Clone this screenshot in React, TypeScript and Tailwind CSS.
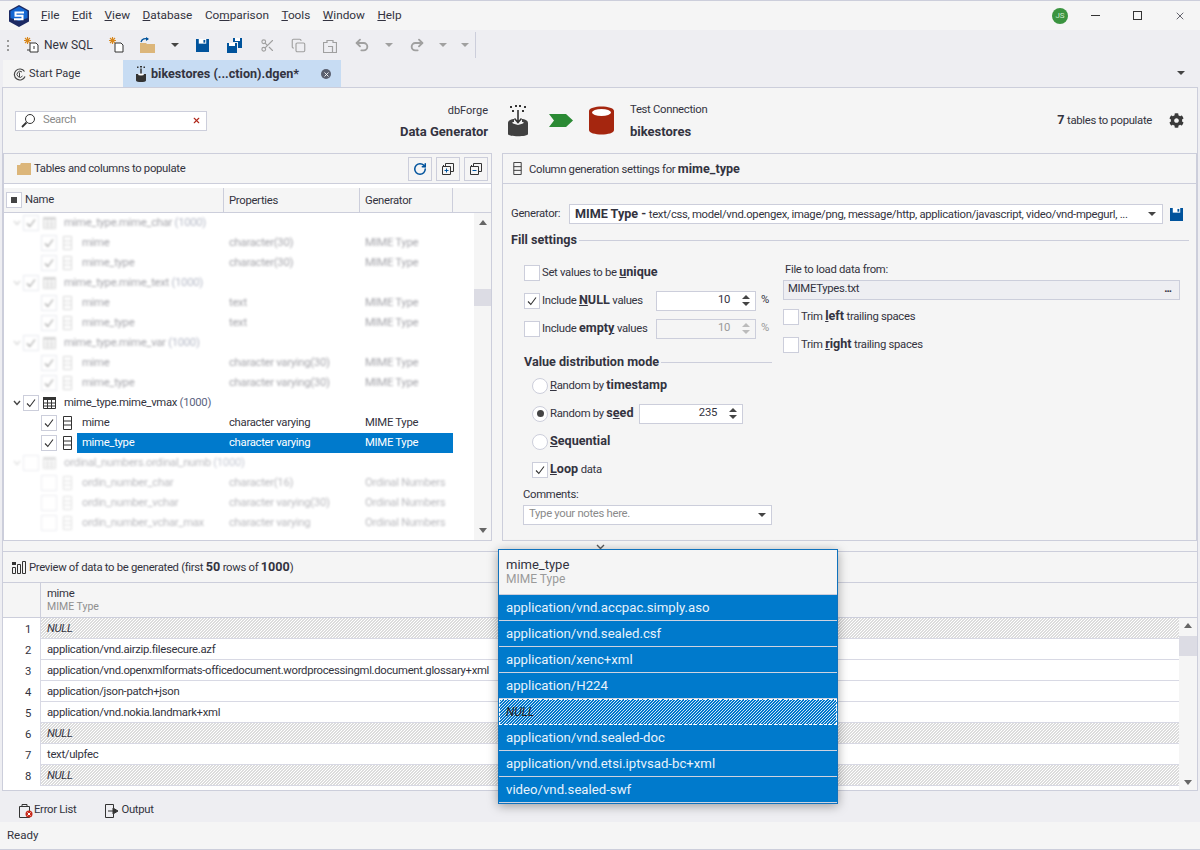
import type { ReactNode } from 'react'
import { Copy, RotateCw, Scissors, Undo2, Redo2, X } from 'lucide-react'
import { FaCog } from 'react-icons/fa'

const menus: [string, string, string][] = [
  ['', 'F', 'ile'],
  ['', 'E', 'dit'],
  ['', 'V', 'iew'],
  ['', 'D', 'atabase'],
  ['Co', 'm', 'parison'],
  ['', 'T', 'ools'],
  ['', 'W', 'indow'],
  ['', 'H', 'elp'],
]

function Caret({ className = 'border-t-[#444]' }: { className?: string }) {
  return <span className={`inline-block h-0 w-0 border-x-[4px] border-t-[4px] border-x-transparent ${className}`} />
}

function Check({ on, className = '' }: { on?: boolean; className?: string }) {
  return (
    <span className={`flex h-4 w-4 shrink-0 items-center justify-center border border-[#cccedb] bg-white ${className}`}>
      {on && (
        <svg width="10" height="10" viewBox="0 0 10 10">
          <path d="M1 5.5 L3.8 8.5 L9 1.5" fill="none" stroke="#333" strokeWidth="1.1" />
        </svg>
      )}
    </span>
  )
}

function Radio({ on }: { on?: boolean }) {
  return (
    <span className="flex h-4 w-4 shrink-0 items-center justify-center rounded-full border border-[#cccedb] bg-white">
      {on && <span className="h-[7px] w-[7px] rounded-full bg-[#444]" />}
    </span>
  )
}

function Spin({ dim }: { dim?: boolean }) {
  const c = dim ? 'border-b-[#bbb]' : 'border-b-[#444]'
  const d = dim ? 'border-t-[#bbb]' : 'border-t-[#444]'
  return (
    <span className="flex flex-col gap-[3px]">
      <span className={`h-0 w-0 border-x-[4px] border-b-[4px] border-x-transparent ${c}`} />
      <span className={`h-0 w-0 border-x-[4px] border-t-[4px] border-x-transparent ${d}`} />
    </span>
  )
}

function Floppy({ size = 14 }: { size?: number }) {
  return (
    <svg width={size} height={size} viewBox="0 0 14 14">
      <path d="M0 0H14V14H0Z" fill="#00539c" />
      <path d="M3 0H11V5H3Z" fill="#fff" />
      <path d="M8 1H10V4H8Z" fill="#00539c" />
    </svg>
  )
}

function DoubleFloppy() {
  return (
    <svg width="15" height="15" viewBox="0 0 15 15">
      <path d="M0 5H10V15H0Z" fill="#00539c" />
      <path d="M2 5H8V8H2Z" fill="#fff" />
      <path d="M6 0H15V10H11V4H6Z" fill="#00539c" />
      <path d="M8 0H13V3H8Z" fill="#fff" />
    </svg>
  )
}

function NewDoc({ tail }: { tail?: boolean }) {
  return (
    <svg width="16" height="16" viewBox="0 0 16 16">
      <path d="M6 6H12L14 8V15H6Z" fill="#fff" stroke="#333" />
      {tail && <path d="M3 13H6M10 9V12" stroke="#333" />}
      <path d="M3.5 0V7M0 3.5H7M1 1L6 6M6 1L1 6" stroke="#d8871c" strokeWidth="1.1" />
    </svg>
  )
}

function OpenFolder() {
  return (
    <svg width="16" height="16" viewBox="0 0 16 16">
      <path d="M0 6H6L7 7H15V16H0Z" fill="#dcb67a" />
      <path d="M1 5C2 2 5 1 8 2" fill="none" stroke="#00539c" strokeWidth="1.4" />
      <path d="M6 0L9 2L6 4Z" fill="#00539c" />
    </svg>
  )
}

function ColIcon({ light, size = 14 }: { light?: boolean; size?: number }) {
  const c = light ? '#aaa' : '#333'
  return (
    <svg width="9" height={size} viewBox="0 0 9 14" className="shrink-0">
      <path d="M.5.5H8.5V13.5H.5ZM.5 5H8.5M.5 9H8.5" fill="none" stroke={c} />
    </svg>
  )
}

function TableIcon({ light }: { light?: boolean }) {
  const c = light ? '#aaa' : '#333'
  return (
    <svg width="13" height="12" viewBox="0 0 13 12" className="shrink-0">
      <path d="M.5.5H12.5V11.5H.5Z" fill="none" stroke={c} />
      <path d="M0 0H13V3H0Z" fill={c} />
      <path d="M.5 6H12.5M.5 9H12.5M4.5 3V12M8.5 3V12" stroke={c} fill="none" />
    </svg>
  )
}

function GenDb({ w = 20, h = 32 }: { w?: number; h?: number }) {
  return (
    <svg width={w} height={h} viewBox="0 0 20 32">
      <path d="M2 1H4V3H2ZM7 0H9V2H7ZM11 0H13V2H11ZM16 1H18V3H16ZM4 5H6V7H4ZM14 5H16V7H14Z" fill="#333" />
      <path d="M0 18C0 15 4 14 6 14V17C4 17 2 18 10 20C18 18 16 17 14 17V14C16 14 20 15 20 18V29C20 32 0 32 0 29Z" fill="#414141" />
      <path d="M10 5V17M6.5 13.5L10 17.5L13.5 13.5" fill="none" stroke="#333" strokeWidth="1.6" />
    </svg>
  )
}

function TabGenDb() {
  return (
    <svg width="12" height="16" viewBox="0 0 20 32">
      <path d="M2 1H5V4H2ZM8 0H12V3H8ZM15 1H18V4H15Z" fill="#333" />
      <path d="M0 16H20V29C20 33 0 33 0 29Z" fill="#333" />
      <path d="M10 5V20" stroke="#333" strokeWidth="3" />
      <ellipse cx="10" cy="17" rx="6" ry="2" fill="#fff" />
    </svg>
  )
}

function Logo() {
  return (
    <svg width="20" height="22" viewBox="0 0 20 22">
      <path d="M10 0L20 5.5V16.5L10 22L0 16.5V5.5Z" fill="#1c2a63" />
      <path d="M10 1.5L18.5 6.2V13L10 16L1.5 13V6.2Z" fill="#1467d2" />
      <path d="M15 7.5H6.5V10.8H13.5V14.2H5" fill="none" stroke="#fff" strokeWidth="2" />
    </svg>
  )
}

function ToolBtn({ children }: { children: ReactNode }) {
  return (
    <button className="flex h-6 w-6 items-center justify-center border border-[#cccedb] bg-[#f5f5f5]">
      {children}
    </button>
  )
}

function CollapseIcon({ plus }: { plus?: boolean }) {
  return (
    <svg width="12" height="12" viewBox="0 0 12 12">
      <path d="M3.5 3V.5H11.5V8.5H9M1.5 3V2" fill="none" stroke="#333" />
      <path d="M.5 3.5H8.5V11.5H.5Z" fill="#f5f5f5" stroke="#333" />
      <path d={plus ? 'M2.5 7.5H6.5M4.5 5.5V9.5' : 'M2.5 7.5H6.5'} stroke="#00539c" />
    </svg>
  )
}

function TableRow({ name, count, on, light }: { name: string; count: string; on?: boolean; light?: boolean }) {
  return (
    <div className="flex h-5 items-center whitespace-nowrap">
      <span className="ml-[8px] w-[10px]">
        <svg width="8" height="6" viewBox="0 0 8 6">
          <path d="M1 1L4 4.5L7 1" fill="none" stroke={light ? '#aaa' : '#444'} strokeWidth="1.4" />
        </svg>
      </span>
      <Check on={on} />
      <span className="ml-[4px]">
        <TableIcon light={light} />
      </span>
      <span className="mt-px ml-[8px]">
        {name} <span className="text-[#5a6380]">({count})</span>
      </span>
    </div>
  )
}

function ColRow({ name, prop, gen, on, sel, light }: { name: string; prop: string; gen: string; on?: boolean; sel?: boolean; light?: boolean }) {
  return (
    <div className="flex h-5 items-center whitespace-nowrap">
      <span className="ml-[36px]">
        <Check on={on} />
      </span>
      <span className="ml-[6px] w-[14px]">
        <ColIcon light={light} />
      </span>
      <div className={`flex h-5 w-[376px] items-center pt-px ${sel ? 'bg-[#007acc] text-white' : ''}`}>
        <span className="w-[152px] pl-[5px]">{name}</span>
        <span className="w-[136px]">{prop}</span>
        <span>{gen}</span>
      </div>
    </div>
  )
}

function Label({ children }: { children: ReactNode }) {
  return <span className="ml-[2px] whitespace-nowrap">{children}</span>
}

function NumBox({ value, w, dim }: { value: string; w: string; dim?: boolean }) {
  return (
    <div className={`flex h-5 items-center justify-end border border-[#cccedb] pr-[5px] ${w} ${dim ? 'bg-[#f5f5f5] text-[#999]' : 'bg-white'}`}>
      <span className="mr-[12px]">{value}</span>
      <Spin dim={dim} />
    </div>
  )
}

function HatchRow({ n }: { n: number }) {
  return (
    <div className="flex h-[21px]">
      <span className="w-[37px] pr-[9px] text-right leading-[23px]">{n}</span>
      <div className="flex-1 border-b border-l border-[#d8d9e4] bg-[linear-gradient(135deg,#dcdcdc_25%,#fff_25%,#fff_50%,#dcdcdc_50%,#dcdcdc_75%,#fff_75%)] bg-[length:3px_3px] pl-[6px] leading-[21px]">
        <i>NULL</i>
      </div>
    </div>
  )
}

function TextRow({ n, text }: { n: number; text: string }) {
  return (
    <div className="flex h-[21px]">
      <span className="w-[37px] pr-[9px] text-right leading-[23px]">{n}</span>
      <div className="flex-1 border-b border-l border-[#d8d9e4] pl-[6px] leading-[21px] whitespace-nowrap">{text}</div>
    </div>
  )
}

const popupRows = [
  'application/vnd.accpac.simply.aso',
  'application/vnd.sealed.csf',
  'application/xenc+xml',
  'application/H224',
  null,
  'application/vnd.sealed-doc',
  'application/vnd.etsi.iptvsad-bc+xml',
  'video/vnd.sealed-swf',
]

export default function App() {
  return (
    <div className="relative flex h-[850px] w-[1200px] flex-col overflow-hidden border-t border-[#cccedb] bg-[#eeeef2] font-['Roboto',sans-serif] text-[11.3px] tracking-[-0.3px] text-[#333340] [&_b]:text-[12.6px] [&_b]:tracking-normal">
      {/* title bar */}
      <div className="flex h-[29px] shrink-0 items-center bg-[#f5f5f5]">
        <span className="ml-[9px] flex">
          <Logo />
        </span>
        <nav className="ml-[12px] flex gap-[12.5px] text-[11.8px] tracking-normal">
          {menus.map(([a, u, b]) => (
            <span key={a + u + b}>
              {a}
              <u>{u}</u>
              {b}
            </span>
          ))}
        </nav>
        <span className="ml-auto flex h-4 w-4 items-center justify-center rounded-full bg-[#3b9440] text-[8px] tracking-normal text-[#cfe8cf]">JS</span>
        <span className="ml-[23px] h-[1px] w-[9px] bg-[#333]" />
        <span className="ml-[33px] h-[9px] w-[9px] border border-[#333]" />
        <span className="mr-[14px] ml-[32px]">
          <X size={12} strokeWidth={1.5} />
        </span>
      </div>

      {/* toolbar */}
      <div className="flex h-[30px] shrink-0 items-center">
        <span className="ml-[7px] h-[11px] w-[2px] border-l-2 border-dotted border-[#999]" />
        <span className="ml-[15px]">
          <NewDoc tail />
        </span>
        <span className="ml-[4px] text-[12px] tracking-normal">New SQL</span>
        <span className="ml-[16px]">
          <NewDoc />
        </span>
        <span className="ml-[15px]">
          <OpenFolder />
        </span>
        <span className="ml-[15px] flex">
          <Caret />
        </span>
        <span className="ml-[17px] flex">
          <Floppy size={13} />
        </span>
        <span className="ml-[18px] flex">
          <DoubleFloppy />
        </span>
        <Scissors size={15} strokeWidth={1.8} className="ml-[18px] text-[#a0a0a0]" />
        <Copy size={15} strokeWidth={1.8} className="ml-[16px] text-[#a0a0a0]" />
        <svg width="14" height="15" viewBox="0 0 14 15" className="ml-[17px]">
          <path d="M.5 4.5H4V2.5H10V4.5H13.5V14.5H.5ZM5 8.5H9.5V14" fill="none" stroke="#a0a0a0" strokeWidth="1.2" />
        </svg>
        <Undo2 size={16} strokeWidth={2.8} className="ml-[17px] text-[#a0a0a0]" />
        <span className="ml-[15px] flex">
          <Caret className="border-t-[#a0a0a0]" />
        </span>
        <Redo2 size={16} strokeWidth={2.8} className="ml-[16px] text-[#a0a0a0]" />
        <span className="ml-[14px] flex">
          <Caret className="border-t-[#a0a0a0]" />
        </span>
        <span className="ml-[14px] flex">
          <Caret className="border-t-[#a0a0a0]" />
        </span>
        <span className="ml-[6px] h-[26px] w-px bg-[#cccedb]" />
      </div>

      {/* document tabs */}
      <div className="flex h-[27px] shrink-0 items-stretch pl-[3px]">
        <div className="flex w-[120px] items-center gap-[3px] bg-[#f5f5f5] pt-[2px] pl-[10px]">
          <svg width="13" height="13" viewBox="0 0 13 13">
            <path d="M11.5 3.5A5.5 5.5 0 1 0 12 8.5" fill="none" stroke="#444" strokeWidth="1.2" />
            <path d="M9 4A3 3 0 1 0 9.5 8" fill="none" stroke="#444" />
            <path d="M6.5 4.5V9" stroke="#444" />
          </svg>
          <span className="text-[11px] tracking-normal">Start Page</span>
        </div>
        <div className="flex w-[218px] items-center bg-[#c7dcf3] pt-[1px] pl-[12px]">
          <TabGenDb />
          <span className="ml-[4px] text-[12.6px] font-bold tracking-normal">bikestores (...ction).dgen*</span>
          <span className="mr-[10px] ml-auto flex h-[10px] w-[10px] items-center justify-center rounded-full bg-[#5a5f6e] text-white">
            <X size={7} strokeWidth={3} />
          </span>
        </div>
        <span className="mt-[11px] mr-[15px] ml-auto">
          <span className="flex">
            <Caret />
          </span>
        </span>
      </div>

      {/* document */}
      <div className="mx-[2px] flex min-h-0 flex-1 flex-col border border-[#cccedb] bg-[#f5f5f5]">
        {/* header */}
        <div className="flex h-[65px] shrink-0 items-center">
          <div className="ml-[12px] flex h-[20px] w-[192px] items-center border border-[#cccedb] bg-white pr-[5px]">
            <svg width="15" height="15" viewBox="0 0 15 15" className="ml-[5px]">
              <circle cx="9" cy="6" r="4.5" fill="none" stroke="#333" />
              <path d="M5.5 9.5L1 14" stroke="#333" strokeWidth="1.8" />
            </svg>
            <span className="ml-[7px] text-[#8a8a8a]">Search</span>
            <X size={9} strokeWidth={3} className="ml-auto text-[#b0281a]" />
          </div>
          <div className="flex w-[281px] flex-col items-end gap-[3px] pt-[3px] text-[11px] tracking-normal">
            <span>dbForge</span>
            <span className="text-[13px] font-bold">Data Generator</span>
          </div>
          <div className="ml-[20px] flex">
            <GenDb />
          </div>
          <svg width="24" height="13" viewBox="0 0 24 13" className="ml-[21px]">
            <path d="M0 0H17L24 6.5L17 13H0L5 6.5Z" fill="#2b8a34" />
          </svg>
          <svg width="25" height="29" viewBox="0 0 25 29" className="ml-[16px]">
            <path d="M0 5C0-1 25-1 25 5V24C25 30 0 30 0 24Z" fill="#a5260f" />
            <ellipse cx="12.5" cy="6.5" rx="9.5" ry="3.5" fill="#fff" />
          </svg>
          <div className="ml-[16px] flex flex-col gap-[3px] pt-[3px]">
            <span>Test Connection</span>
            <span className="text-[13px] font-bold tracking-normal">bikestores</span>
          </div>
          <span className="ml-auto">
            <b>7</b> tables to populate
          </span>
          <span className="mr-[13px] ml-[17px] flex">
            <FaCog size={15} color="#3a3a3a" />
          </span>
        </div>

        {/* panels */}
        <div className="flex h-[388px] shrink-0 gap-[10px]">
          <div className="flex w-[489px] shrink-0 flex-col border border-[#cccedb]">
            <div className="flex h-[30px] shrink-0 items-center border-b border-[#cccedb] pl-[13px]">
              <svg width="14" height="12" viewBox="0 0 14 12">
                <path d="M0 2H3L4 0H14V12H0Z" fill="#dcb67a" />
              </svg>
              <span className="mt-[2px] ml-[3px]">Tables and columns to populate</span>
              <div className="mr-[3px] ml-auto flex gap-[4px]">
                <ToolBtn>
                  <RotateCw size={14} strokeWidth={2.6} className="text-[#00539c]" />
                </ToolBtn>
                <ToolBtn>
                  <CollapseIcon plus />
                </ToolBtn>
                <ToolBtn>
                  <CollapseIcon />
                </ToolBtn>
              </div>
            </div>
            <div className="flex min-h-0 flex-1 flex-col bg-white">
              <div className="border-t-[4px] border-t-white">
                <div className="flex h-[25px] shrink-0 items-center border-b border-[#cccedb] bg-[#f5f5f5]">
                  <span className="ml-[2px] flex h-4 w-4 items-center justify-center border border-[#cccedb] bg-white">
                    <span className="h-[6px] w-[6px] bg-[#444]" />
                  </span>
                  <span className="mt-px ml-[3px] w-[198px]">Name</span>
                  <span className="h-full w-[136px] border-l border-[#cccedb] pl-[5px] leading-[25px]">Properties</span>
                  <span className="h-full w-[94px] border-r border-l border-[#cccedb] pl-[5px] leading-[25px]">Generator</span>
                </div>
              </div>
              <div className="flex min-h-0 flex-1">
                <div className="min-w-0 flex-1 overflow-hidden pl-px">
                  <div className="opacity-45 blur-[1.2px]">
                    <TableRow name="mime_type.mime_char" count="1000" on light />
                    <ColRow name="mime" prop="character(30)" gen="MIME Type" on light />
                    <ColRow name="mime_type" prop="character(30)" gen="MIME Type" on light />
                    <TableRow name="mime_type.mime_text" count="1000" on light />
                    <ColRow name="mime" prop="text" gen="MIME Type" on light />
                    <ColRow name="mime_type" prop="text" gen="MIME Type" on light />
                    <TableRow name="mime_type.mime_var" count="1000" on light />
                    <ColRow name="mime" prop="character varying(30)" gen="MIME Type" on light />
                    <ColRow name="mime_type" prop="character varying(30)" gen="MIME Type" on light />
                  </div>
                  <TableRow name="mime_type.mime_vmax" count="1000" on />
                  <ColRow name="mime" prop="character varying" gen="MIME Type" on />
                  <ColRow name="mime_type" prop="character varying" gen="MIME Type" on sel />
                  <div className="opacity-35 blur-[1.2px]">
                    <TableRow name="ordinal_numbers.ordinal_numb" count="1000" light />
                    <ColRow name="ordin_number_char" prop="character(16)" gen="Ordinal Numbers" light />
                    <ColRow name="ordin_number_vchar" prop="character varying(30)" gen="Ordinal Numbers" light />
                    <ColRow name="ordin_number_vchar_max" prop="character varying" gen="Ordinal Numbers" light />
                  </div>
                </div>
                <div className="flex w-[17px] shrink-0 flex-col items-center bg-[#f5f5f5] py-[7px]">
                  <span className="h-0 w-0 border-x-[4px] border-b-[5px] border-x-transparent border-b-[#666]" />
                  <span className="mt-[64px] h-[17px] w-full bg-[#dcdce4]" />
                  <span className="mt-auto h-0 w-0 border-x-[4px] border-t-[5px] border-x-transparent border-t-[#666]" />
                </div>
              </div>
            </div>
          </div>

          <div className="flex min-w-0 flex-1 flex-col border border-[#cccedb] pr-[7px]">
            <div className="-mr-[7px] flex h-[30px] shrink-0 items-center border-b border-[#cccedb] pl-[10px]">
              <ColIcon size={13} />
              <span className="mt-[2px] ml-[7px]">
                Column generation settings for <b>mime_type</b>
              </span>
            </div>
            <div className="mt-[20px] flex items-center pl-[8px]">
              <span className="w-[58px]">Generator:</span>
              <div className="flex h-5 w-[594px] items-center border border-[#cccedb] bg-white pr-[6px] pl-[5px]">
                <span className="min-w-0 flex-1 truncate whitespace-nowrap">
                  <b>MIME Type -</b> text/css, model/vnd.opengex, image/png, message/http, application/javascript, video/vnd-mpegurl, ...
                </span>
                <Caret />
              </div>
              <span className="ml-[7px] flex">
                <Floppy size={13} />
              </span>
            </div>
            <div className="mt-[7px] flex items-center pl-[8px]">
              <b>Fill settings</b>
              <span className="ml-[2px] h-px flex-1 bg-[#cccedb]" />
            </div>
            <div className="flex">
              <div className="ml-[21px] flex w-[248px] shrink-0 flex-col">
                <div className="mt-[15px] flex h-4 items-center">
                  <Check />
                  <Label>
                    Set values to be <b><u>u</u>nique</b>
                  </Label>
                </div>
                <div className="mt-[12px] flex h-4 items-center">
                  <Check on />
                  <span className="ml-[2px] w-[114px] whitespace-nowrap">
                    Include <b><u>N</u>ULL</b> values
                  </span>
                  <NumBox value="10" w="w-[100px]" />
                  <span className="ml-[5px]">%</span>
                </div>
                <div className="mt-[12px] flex h-4 items-center">
                  <Check />
                  <span className="ml-[2px] w-[114px] whitespace-nowrap">
                    Include <b>empt<u>y</u></b> values
                  </span>
                  <NumBox value="10" w="w-[100px]" dim />
                  <span className="ml-[5px] text-[#999]">%</span>
                </div>
                <div className="mt-[16px] flex items-center">
                  <b className="whitespace-nowrap">Value distribution mode</b>
                  <span className="ml-[2px] h-px flex-1 bg-[#cccedb]" />
                </div>
                <div className="mt-[6px] ml-[8px] flex h-4 items-center">
                  <Radio />
                  <Label>
                    <u>R</u>andom by <b>timestamp</b>
                  </Label>
                </div>
                <div className="mt-[12px] ml-[8px] flex h-4 items-center">
                  <Radio on />
                  <span className="ml-[2px] w-[89px] whitespace-nowrap">
                    Random by <b>s<u>e</u>ed</b>
                  </span>
                  <NumBox value="235" w="w-[104px]" />
                </div>
                <div className="mt-[12px] ml-[8px] flex h-4 items-center">
                  <Radio />
                  <Label>
                    <b><u>S</u>equential</b>
                  </Label>
                </div>
                <div className="mt-[12px] ml-[8px] flex h-4 items-center">
                  <Check on />
                  <Label>
                    <b><u>L</u>oop</b> data
                  </Label>
                </div>
                <span className="mt-[9px] -ml-px leading-[16px]">Comments:</span>
                <div className="mt-[2px] -ml-px flex h-5 items-center border border-[#cccedb] bg-white pr-[5px] pl-[5px] text-[#8a8a8a]">
                  Type your notes here.
                  <span className="ml-auto flex">
                    <Caret />
                  </span>
                </div>
              </div>
              <div className="ml-[11px] flex w-[397px] flex-col">
                <span className="mt-[12px] ml-[2px] leading-[16px]">File to load data from:</span>
                <div className="mt-[2px] flex h-5 items-center border border-[#cccedb] bg-[#eeeef2] pr-[8px] pl-[4px]">
                  MIMETypes.txt
                  <span className="ml-auto font-bold tracking-[-1px]">...</span>
                </div>
                <div className="mt-[9px] flex h-4 items-center">
                  <Check />
                  <Label>
                    Trim <b><u>l</u>eft</b> trailing spaces
                  </Label>
                </div>
                <div className="mt-[12px] flex h-4 items-center">
                  <Check />
                  <Label>
                    Trim <b><u>r</u>ight</b> trailing spaces
                  </Label>
                </div>
              </div>
            </div>
          </div>
        </div>

        {/* splitter */}
        <div className="h-[10px] shrink-0" />

        {/* preview */}
        <div className="flex min-h-0 flex-1 flex-col border-t border-[#cccedb]">
          <div className="flex h-[31px] shrink-0 items-center border-b border-[#cccedb] pl-[9px]">
            <svg width="14" height="13" viewBox="0 0 14 13">
              <path d="M.5 6.5H3.5V12.5H.5ZM5.5 3.5H8.5V12.5H5.5ZM10.5.5H13.5V12.5H10.5Z" fill="none" stroke="#333" />
              <path d="M0 1H4V4H0Z" fill="#333" />
            </svg>
            <span className="mt-px ml-[3px]">
              Preview of data to be generated (first <b>50</b> rows of <b>1000</b>)
            </span>
          </div>
          <div className="flex h-[35px] shrink-0 border-b border-[#cccedb]">
            <span className="w-[37px] shrink-0" />
            <div className="flex flex-1 flex-col border-l border-[#cccedb] pt-[4px] pl-[6px] leading-[13px]">
              <span>mime</span>
              <span className="text-[10.5px] tracking-normal text-[#8f8f8f]">MIME Type</span>
            </div>
          </div>
          <div className="flex min-h-0 flex-1 bg-white">
            <div className="min-w-0 flex-1 overflow-hidden">
              <HatchRow n={1} />
              <TextRow n={2} text="application/vnd.airzip.filesecure.azf" />
              <TextRow n={3} text="application/vnd.openxmlformats-officedocument.wordprocessingml.document.glossary+xml" />
              <TextRow n={4} text="application/json-patch+json" />
              <TextRow n={5} text="application/vnd.nokia.landmark+xml" />
              <HatchRow n={6} />
              <TextRow n={7} text="text/ulpfec" />
              <HatchRow n={8} />
            </div>
            <div className="flex w-[18px] shrink-0 flex-col items-center bg-[#f5f5f5] py-[5px]">
              <span className="h-0 w-0 border-x-[4px] border-b-[5px] border-x-transparent border-b-[#666]" />
              <span className="mt-[8px] h-[20px] w-full bg-[#dcdce4]" />
              <span className="mt-auto h-0 w-0 border-x-[4px] border-t-[5px] border-x-transparent border-t-[#666]" />
            </div>
          </div>
        </div>
      </div>

      {/* tool windows */}
      <div className="flex h-[31px] shrink-0 items-center pt-[8px] pl-[19px]">
        <svg width="14" height="15" viewBox="0 0 14 15">
          <path d="M.5 3.5H10.5V14.5H.5ZM3 3.5V1.5H8V3.5" fill="none" stroke="#333" />
          <circle cx="10" cy="11" r="3.5" fill="#c8281a" />
          <path d="M8.5 9.5L11.5 12.5M11.5 9.5L8.5 12.5" stroke="#fff" />
        </svg>
        <span className="ml-[1px]">Error List</span>
        <svg width="14" height="14" viewBox="0 0 14 14" className="ml-[29px]">
          <path d="M8.5 4V.5H.5V13.5H8.5V10" fill="none" stroke="#333" />
          <path d="M3 7H10M8 4L13 7L8 10Z" fill="#333" stroke="#333" />
        </svg>
        <span className="ml-[2px]">Output</span>
      </div>

      {/* status bar */}
      <div className="flex h-[28px] shrink-0 items-center border-b border-[#cccedb] bg-[#f5f5f5] pl-[7px] text-[11.5px] tracking-normal">Ready</div>

      {/* floating column preview */}
      <div className="absolute top-[548px] left-[498px] w-[340px] border border-[#0f72bd] bg-[#f5f5f5] tracking-normal shadow-[0_2px_10px_rgba(0,0,0,0.35)]">
        <div className="flex h-[45px] flex-col justify-center border-b border-[#cccedb] pl-[7px] leading-[15px]">
          <span className="text-[13px]">mime_type</span>
          <span className="text-[12px] text-[#9a9a9a]">MIME Type</span>
        </div>
        {popupRows.map((r, i) =>
          r ? (
            <div key={i} className="flex h-[26px] items-center border-b border-[#cfd3e0] bg-[#007acc] pl-[7px] text-[13.2px] text-[#e8f2fb]">
              {r}
            </div>
          ) : (
            <div key={i} className="flex h-[26px] items-center border border-dashed border-white bg-[linear-gradient(135deg,#0078cc_25%,#d4e6f5_25%,#d4e6f5_50%,#0078cc_50%,#0078cc_75%,#d4e6f5_75%)] bg-[length:3px_3px] pl-[6px] text-[12px] text-[#222]">
              <i>NULL</i>
            </div>
          ),
        )}
      </div>
      <svg width="9" height="6" viewBox="0 0 9 6" className="absolute top-[543px] left-[596px]">
        <path d="M1 1L4.5 4.5L8 1" fill="none" stroke="#555" strokeWidth="1.4" />
      </svg>
    </div>
  )
}
